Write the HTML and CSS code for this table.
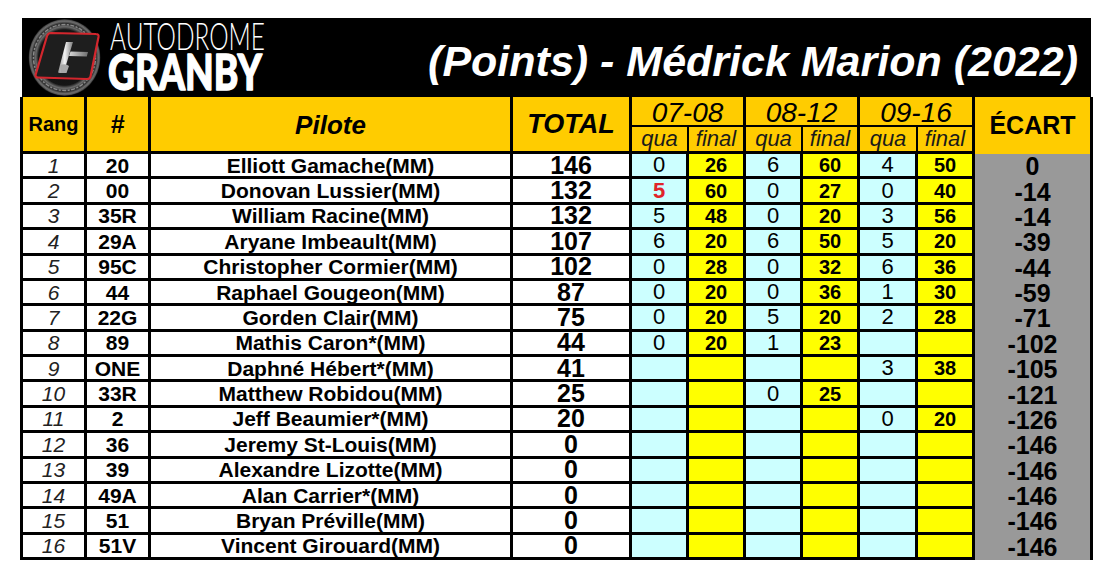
FILE: index.html
```html
<!DOCTYPE html>
<html lang="fr">
<head>
<meta charset="utf-8">
<title>Autodrome Granby - Points Médrick Marion 2022</title>
<link rel="stylesheet" href="styles.css">
</head>
<body>
<div class="page">
  <div class="banner">
    <svg class="logo" viewBox="0 0 250 79" width="250" height="79" aria-label="Autodrome Granby">
      <defs>
        <radialGradient id="disc" cx="50%" cy="50%" r="50%">
          <stop offset="0" stop-color="#0c0c0c"/>
          <stop offset="0.72" stop-color="#151515"/>
          <stop offset="0.8" stop-color="#6a6a6a"/>
          <stop offset="0.88" stop-color="#2a2a2a"/>
          <stop offset="0.95" stop-color="#7a7a7a"/>
          <stop offset="1" stop-color="#1a1a1a"/>
        </radialGradient>
        <linearGradient id="chrome" x1="0" y1="0" x2="1" y2="0">
          <stop offset="0" stop-color="#8c8c8c"/>
          <stop offset="0.45" stop-color="#f4f4f4"/>
          <stop offset="1" stop-color="#7a7a7a"/>
        </linearGradient>
        <linearGradient id="bar" x1="0" y1="0" x2="1" y2="0">
          <stop offset="0" stop-color="#d8d8d8"/>
          <stop offset="1" stop-color="#6e6e6e"/>
        </linearGradient>
      </defs>
      <ellipse cx="42.5" cy="39.5" rx="36" ry="38.5" fill="url(#disc)"/>
      <ellipse cx="42.5" cy="39.5" rx="31" ry="33" fill="none" stroke="#8a8a8a" stroke-width="1.4" stroke-dasharray="2 1.5 4 1.5"/>
      <ellipse cx="42.5" cy="39.5" rx="34.5" ry="37" fill="none" stroke="#5a5a5a" stroke-width="0.8"/>
      <path d="M29 15 L74 16 Q77 16 76.5 19 L68.5 58.5 Q68 61 65 61 L16 59.5 Q13 59.5 13.7 56.5 L25 18 Q26 15 29 15 Z" fill="#1e1e1e" stroke="#d3262d" stroke-width="2.2" stroke-linejoin="round"/>
      <path d="M44 24 L51 24 L42.5 52 Q41 55.5 37.5 55 L36 54.5 Z" fill="url(#chrome)"/>
      <path d="M48.5 33.5 L66 34 L64.8 38.5 L47 38 Z" fill="url(#bar)"/>
      <path d="M38 47 Q44 45 47 48 L44.5 55 L39 55 Z" fill="#a8a8a8"/>
      <text class="lg-auto" x="88" y="32" textLength="155" lengthAdjust="spacingAndGlyphs">AUTODROME</text>
      <text class="lg-granby" x="86" y="72" textLength="154" lengthAdjust="spacingAndGlyphs">GRANBY</text>
    </svg>
    <h1 class="title">(Points) - Médrick Marion (2022)</h1>
  </div>

  <div class="board">
    <div class="cell hd h-rang tall">Rang</div>
    <div class="cell hd h-num tall">#</div>
    <div class="cell hd h-pil tall">Pilote</div>
    <div class="cell hd h-tot tall">TOTAL</div>
    <div class="cell hd date">07-08</div>
    <div class="cell hd date">08-12</div>
    <div class="cell hd date">09-16</div>
    <div class="cell hd h-ec tall">ÉCART</div>
    <div class="cell hd sub sub-q">qua</div>
    <div class="cell hd sub">final</div>
    <div class="cell hd sub sub-q">qua</div>
    <div class="cell hd sub">final</div>
    <div class="cell hd sub sub-q">qua</div>
    <div class="cell hd sub">final</div>

    <div class="cell rang">1</div><div class="cell num">20</div><div class="cell pil">Elliott Gamache(MM)</div><div class="cell tot">146</div>
    <div class="cell q">0</div><div class="cell f">26</div><div class="cell q">6</div><div class="cell f">60</div><div class="cell q">4</div><div class="cell f">50</div><div class="cell ec">0</div>

    <div class="cell rang">2</div><div class="cell num">00</div><div class="cell pil">Donovan Lussier(MM)</div><div class="cell tot">132</div>
    <div class="cell q red">5</div><div class="cell f">60</div><div class="cell q">0</div><div class="cell f">27</div><div class="cell q">0</div><div class="cell f">40</div><div class="cell ec">-14</div>

    <div class="cell rang">3</div><div class="cell num">35R</div><div class="cell pil">William Racine(MM)</div><div class="cell tot">132</div>
    <div class="cell q">5</div><div class="cell f">48</div><div class="cell q">0</div><div class="cell f">20</div><div class="cell q">3</div><div class="cell f">56</div><div class="cell ec">-14</div>

    <div class="cell rang">4</div><div class="cell num">29A</div><div class="cell pil">Aryane Imbeault(MM)</div><div class="cell tot">107</div>
    <div class="cell q">6</div><div class="cell f">20</div><div class="cell q">6</div><div class="cell f">50</div><div class="cell q">5</div><div class="cell f">20</div><div class="cell ec">-39</div>

    <div class="cell rang">5</div><div class="cell num">95C</div><div class="cell pil">Christopher Cormier(MM)</div><div class="cell tot">102</div>
    <div class="cell q">0</div><div class="cell f">28</div><div class="cell q">0</div><div class="cell f">32</div><div class="cell q">6</div><div class="cell f">36</div><div class="cell ec">-44</div>

    <div class="cell rang">6</div><div class="cell num">44</div><div class="cell pil">Raphael Gougeon(MM)</div><div class="cell tot">87</div>
    <div class="cell q">0</div><div class="cell f">20</div><div class="cell q">0</div><div class="cell f">36</div><div class="cell q">1</div><div class="cell f">30</div><div class="cell ec">-59</div>

    <div class="cell rang">7</div><div class="cell num">22G</div><div class="cell pil">Gorden Clair(MM)</div><div class="cell tot">75</div>
    <div class="cell q">0</div><div class="cell f">20</div><div class="cell q">5</div><div class="cell f">20</div><div class="cell q">2</div><div class="cell f">28</div><div class="cell ec">-71</div>

    <div class="cell rang">8</div><div class="cell num">89</div><div class="cell pil">Mathis Caron*(MM)</div><div class="cell tot">44</div>
    <div class="cell q">0</div><div class="cell f">20</div><div class="cell q">1</div><div class="cell f">23</div><div class="cell q"></div><div class="cell f"></div><div class="cell ec">-102</div>

    <div class="cell rang">9</div><div class="cell num">ONE</div><div class="cell pil">Daphné Hébert*(MM)</div><div class="cell tot">41</div>
    <div class="cell q"></div><div class="cell f"></div><div class="cell q"></div><div class="cell f"></div><div class="cell q">3</div><div class="cell f">38</div><div class="cell ec">-105</div>

    <div class="cell rang">10</div><div class="cell num">33R</div><div class="cell pil">Matthew Robidou(MM)</div><div class="cell tot">25</div>
    <div class="cell q"></div><div class="cell f"></div><div class="cell q">0</div><div class="cell f">25</div><div class="cell q"></div><div class="cell f"></div><div class="cell ec">-121</div>

    <div class="cell rang">11</div><div class="cell num">2</div><div class="cell pil">Jeff Beaumier*(MM)</div><div class="cell tot">20</div>
    <div class="cell q"></div><div class="cell f"></div><div class="cell q"></div><div class="cell f"></div><div class="cell q">0</div><div class="cell f">20</div><div class="cell ec">-126</div>

    <div class="cell rang">12</div><div class="cell num">36</div><div class="cell pil">Jeremy St-Louis(MM)</div><div class="cell tot">0</div>
    <div class="cell q"></div><div class="cell f"></div><div class="cell q"></div><div class="cell f"></div><div class="cell q"></div><div class="cell f"></div><div class="cell ec">-146</div>

    <div class="cell rang">13</div><div class="cell num">39</div><div class="cell pil">Alexandre Lizotte(MM)</div><div class="cell tot">0</div>
    <div class="cell q"></div><div class="cell f"></div><div class="cell q"></div><div class="cell f"></div><div class="cell q"></div><div class="cell f"></div><div class="cell ec">-146</div>

    <div class="cell rang">14</div><div class="cell num">49A</div><div class="cell pil">Alan Carrier*(MM)</div><div class="cell tot">0</div>
    <div class="cell q"></div><div class="cell f"></div><div class="cell q"></div><div class="cell f"></div><div class="cell q"></div><div class="cell f"></div><div class="cell ec">-146</div>

    <div class="cell rang">15</div><div class="cell num">51</div><div class="cell pil">Bryan Préville(MM)</div><div class="cell tot">0</div>
    <div class="cell q"></div><div class="cell f"></div><div class="cell q"></div><div class="cell f"></div><div class="cell q"></div><div class="cell f"></div><div class="cell ec">-146</div>

    <div class="cell rang">16</div><div class="cell num">51V</div><div class="cell pil">Vincent Girouard(MM)</div><div class="cell tot">0</div>
    <div class="cell q"></div><div class="cell f"></div><div class="cell q"></div><div class="cell f"></div><div class="cell q"></div><div class="cell f"></div><div class="cell ec">-146</div>
  </div>
</div>
</body>
</html>
```

FILE: styles.css
```css
* {
  box-sizing: border-box;
}

html,
body {
  margin: 0;
  background: #ffffff;
}

body {
  font-family: "Liberation Sans", Arial, sans-serif;
  color: #000000;
}

.page {
  width: 1114px;
  padding: 18px 0 0 20px;
}

/* ---------- banner ---------- */
.banner {
  display: flex;
  align-items: center;
  width: 1069px;
  height: 79px;
  margin-left: 2px;
  background: #000000;
}

.logo {
  display: block;
  flex: none;
  overflow: visible;
}

.lg-auto {
  font-family: "Lato", "Liberation Sans", sans-serif;
  font-weight: 300;
  font-size: 38px;
  fill: #ffffff;
}

.lg-granby {
  font-family: "Lato Black", "Lato", "Liberation Sans", sans-serif;
  font-weight: 900;
  font-size: 49px;
  fill: #ffffff;
  stroke: #ffffff;
  stroke-width: 1.4px;
  stroke-linejoin: round;
}

.title {
  margin: 0 13px 0 auto;
  padding-top: 8px;
  color: #ffffff;
  font-size: 43px;
  font-weight: 700;
  font-style: italic;
  line-height: 1;
  white-space: nowrap;
}

/* ---------- board ---------- */
.board {
  display: grid;
  grid-template-columns: 64px 64px 362px 119px 57px 57px 57px 57px 58px 57px 118px;
  grid-template-rows: 30px 27px repeat(16, 25.375px);
  width: 1073px;
  border-left: 3px solid #000000;
}

.cell {
  display: flex;
  align-items: center;
  justify-content: center;
  border-right: 3px solid #000000;
  border-bottom: 3px solid #000000;
  line-height: 1;
  white-space: nowrap;
}

/* header */
.hd {
  background: #ffcc00;
}

.tall {
  grid-row: span 2;
}

.h-rang {
  font-size: 20px;
  font-weight: 700;
}

.h-num {
  font-size: 25px;
  font-weight: 700;
  font-style: italic;
}

.h-pil {
  font-size: 26px;
  font-weight: 700;
  font-style: italic;
  padding-top: 2px;
}

.h-tot {
  font-size: 27px;
  font-weight: 700;
  font-style: italic;
}

.date {
  grid-column: span 2;
  border-bottom-width: 2px;
  font-size: 28px;
  font-style: italic;
  padding-top: 3px;
}

.sub {
  font-size: 22px;
  font-style: italic;
  color: #1a1a1a;
}

.sub-q {
  border-right-width: 2px;
}

.h-ec {
  border-bottom: none;
  font-size: 25px;
  font-weight: 700;
}

/* body cells */
.rang {
  background: #ffffff;
  font-size: 21px;
  font-style: italic;
  color: #222222;
}

.num {
  background: #ffffff;
  font-size: 21px;
  font-weight: 700;
}

.pil {
  background: #ffffff;
  font-size: 21px;
  font-weight: 700;
}

.tot {
  background: #ffffff;
  font-size: 25px;
  font-weight: 700;
}

.q {
  background: #ccffff;
  font-size: 22px;
}

.f {
  background: #ffff00;
  font-size: 20px;
  font-weight: 700;
}

.red {
  color: #e0242a;
  font-weight: 700;
}

.ec {
  background: #999999;
  border-bottom: none;
  font-size: 25px;
  font-weight: 700;
}
```
